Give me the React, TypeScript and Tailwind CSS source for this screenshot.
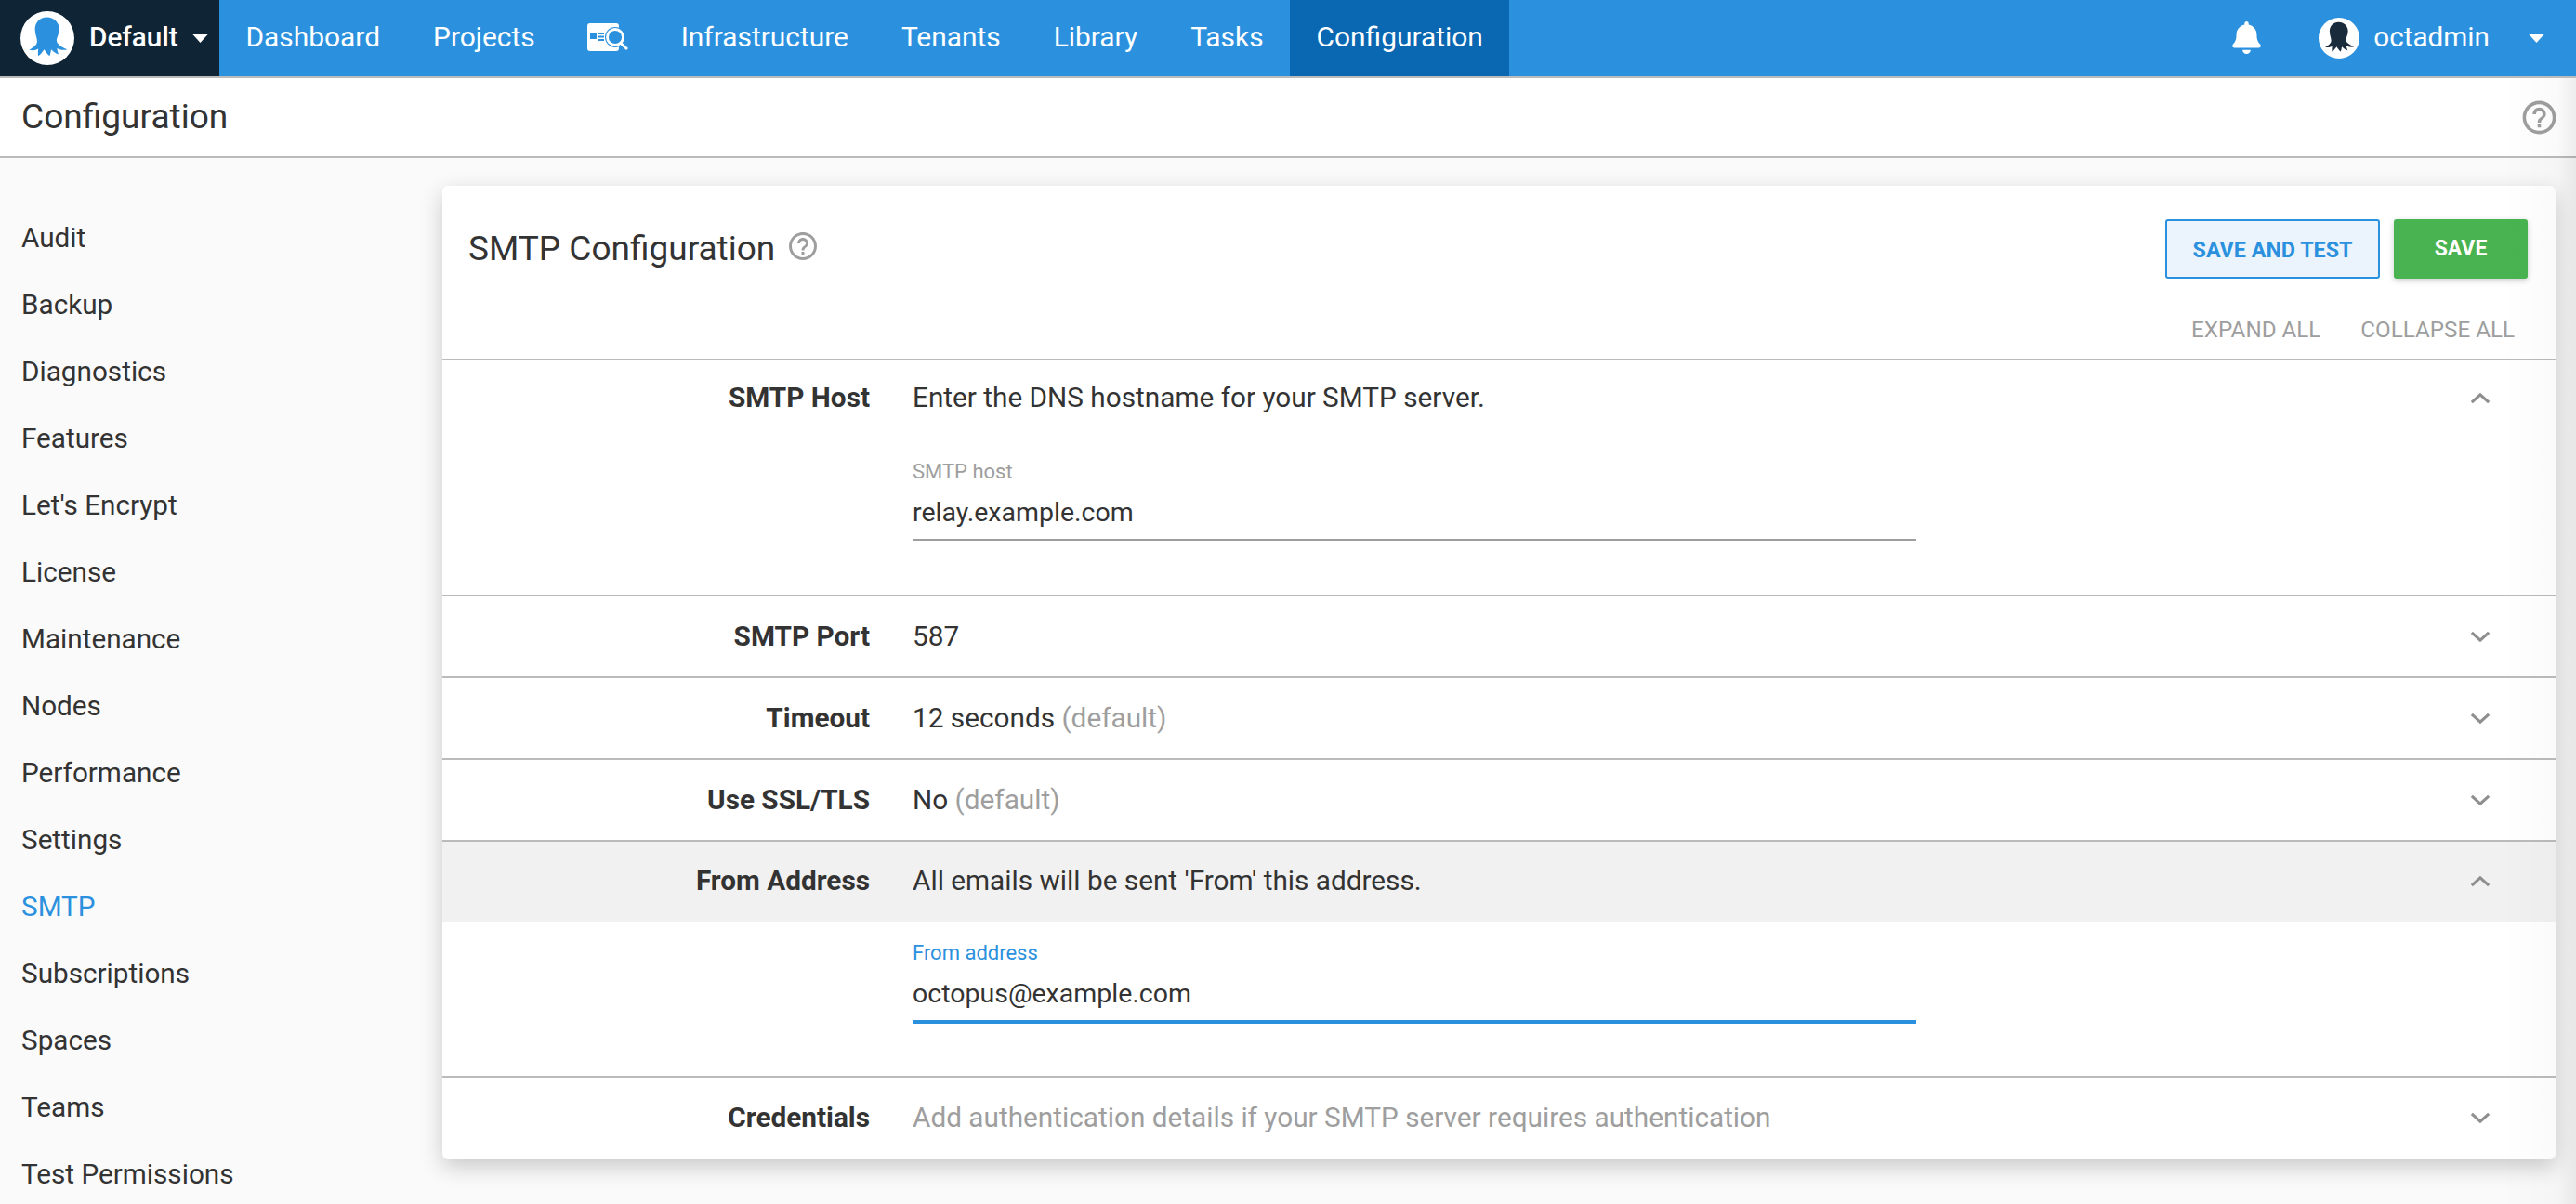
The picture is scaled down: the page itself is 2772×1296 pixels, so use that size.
import { FaBell } from "react-icons/fa";
import { MdHelpOutline } from "react-icons/md";

const OCTO = "M49 11C36 11 27 21 27 33C27 43 31 50 31 56C31 62 25 67 16 72C24 74 30 72 33 70C33 75 32 79 33 83C38 80 41 75 44 71C47 75 50 80 54 83C56 79 56 75 57 71C61 75 66 79 71 80C69 76 68 72 68 69C73 72 80 73 87 71C78 67 68 62 67 55C67 49 72 42 72 33C72 21 62 11 49 11Z";

function Octopus({ color, size }: { color: string; size: number }) {
  return (
    <svg viewBox="0 0 100 100" width={size} height={size} className="shrink-0 block">
      <circle cx="50" cy="50" r="50" fill="#fff" />
      <path d={OCTO} fill={color} />
    </svg>
  );
}

function Caret({ className = "" }: { className?: string }) {
  return (
    <svg viewBox="0 0 18 10" width="17" height="9" className={className}>
      <path d="M0 0h18L9 10Z" fill="#fff" />
    </svg>
  );
}

function Chevron({ up }: { up?: boolean }) {
  return (
    <svg viewBox="0 0 24 14" width="22" height="13" className="shrink-0">
      <path d={up ? "M2 12 12 3l10 9" : "M2 2l10 9 10-9"} fill="none" stroke="#8f8f8f" strokeWidth="3.5" />
    </svg>
  );
}

function LibraryIcon() {
  return (
    <svg viewBox="0 0 44 30" width="44" height="30" className="block -mt-[2px]">
      <rect x="0" y="0" width="34" height="30" rx="3" fill="#fff" />
      <rect x="3" y="10" width="7" height="7" fill="#2b91de" />
      <rect x="11" y="10" width="7" height="2" fill="#2b91de" />
      <rect x="11" y="13.5" width="7" height="2" fill="#2b91de" />
      <rect x="11" y="17" width="7" height="2" fill="#2b91de" />
      <circle cx="30" cy="15" r="11" fill="#2b91de" />
      <circle cx="30" cy="15" r="8.5" fill="none" stroke="#fff" strokeWidth="2.8" />
      <path d="M36 21.5l7 6.5" stroke="#fff" strokeWidth="3" />
    </svg>
  );
}

const nav = ["Dashboard", "Projects", "__icon", "Infrastructure", "Tenants", "Library", "Tasks", "Configuration"];
const side = ["Audit", "Backup", "Diagnostics", "Features", "Let's Encrypt", "License", "Maintenance", "Nodes", "Performance", "Settings", "SMTP", "Subscriptions", "Spaces", "Teams", "Test Permissions"];

function Row({ label, up, hover, border = true, children, body, top = "pt-[20px]" }: { label: string; up?: boolean; hover?: boolean; border?: boolean; children: React.ReactNode; body?: React.ReactNode; top?: string }) {
  return (
    <div className={border ? "border-b-2 border-[#bbbbbb]" : ""}>
      <div className={`flex h-[86px] ${body ? top : "items-center"} ${hover ? "bg-[#f1f1f1]" : ""}`}>
        <div className="w-[460px] shrink-0 text-right font-bold text-[#333333] text-[29.75px] leading-[44px]">{label}</div>
        <div className="ml-[46px] flex-1 text-[29.75px] leading-[44px] text-[#333333]">{children}</div>
        <div className={`w-[92px] shrink-0 flex justify-start ${body ? "pt-[16px]" : "items-center"}`}><Chevron up={up} /></div>
      </div>
      {body}
    </div>
  );
}

function Field({ label, value, focus }: { label: string; value: string; focus?: boolean }) {
  return (
    <div className="h-[166px] pl-[506px] pt-[20px]">
      <div className="w-[1080px]">
        <div className={`text-[22px] leading-[28px] ${focus ? "text-[#2b91de]" : "text-[#9e9e9e]"}`}>{label}</div>
        <div className={`mt-[10px] text-[28.5px] leading-[40px] pb-[8px] text-[#333333] ${focus ? "border-b-4 border-[#2b91de]" : "border-b-2 border-[#9e9e9e]"}`}>{value}</div>
      </div>
    </div>
  );
}

export default function App() {
  return (
    <div className="relative h-[1296px] w-[2772px] overflow-hidden bg-[#fafafa] font-['Roboto',sans-serif] text-[#333333]">
      <header className="flex h-[84px] border-b-2 border-[#bbbbbb] bg-[#2b91de] text-white">
        <div className="flex w-[236px] items-center bg-[#0f2535] pl-[22px]">
          <Octopus color="#2b91de" size={58} />
          <span className="ml-[16px] pb-[2px] text-[29.7px] font-medium">Default</span>
          <Caret className="ml-[15px]" />
        </div>
        <nav className="flex">
          {nav.map((n) =>
            n === "__icon" ? (
              <div key={n} className="flex items-center px-[28px]"><LibraryIcon /></div>
            ) : (
              <div key={n} className={`flex items-center px-[28.5px] pb-[2px] text-[29.9px] ${n === "Configuration" ? "bg-[#0a67b1]" : ""}`}>{n}</div>
            ),
          )}
        </nav>
        <div className="ml-auto flex items-center">
          <FaBell size={35} className="-mt-[2px]" />
          <span className="ml-[60px]"><Octopus color="#1a2b3c" size={44} /></span>
          <span className="ml-[15px] pb-[2px] text-[29.7px]">octadmin</span>
          <Caret className="ml-[42px] mr-[34px]" />
        </div>
      </header>
      <div className="flex h-[86px] items-center justify-between border-b-2 border-[#bbbbbb] bg-white pl-[23px] pr-[18px]">
        <h1 className="text-[37.1px] text-[#333333]">Configuration</h1>
        <MdHelpOutline size={43} className="text-[#9e9e9e]" />
      </div>
      <div className="flex">
        <aside className="w-[476px] shrink-0 pl-[23px] pt-[50px]">
          {side.map((s) => (
            <div key={s} className={`flex h-[72px] items-center text-[29.7px] ${s === "SMTP" ? "text-[#2b91de]" : "text-[#333333]"}`}>{s}</div>
          ))}
        </aside>
        <main className="mt-[30px] h-[1048px] w-[2274px] shrink-0 rounded-[6px] bg-white shadow-[0_8px_24px_rgba(0,0,0,0.2)]">
          <div className="h-[188px] border-b-2 border-[#bbbbbb]">
            <div className="flex items-start justify-between pl-[28px] pr-[30px] pt-[36px]">
              <div className="flex items-center pt-[5px]">
                <h2 className="text-[37px] leading-[54px] text-[#333333]">SMTP Configuration</h2>
                <MdHelpOutline size={36} className="ml-[12px] -mt-[6px] text-[#9e9e9e]" />
              </div>
              <div className="flex gap-[15px]">
                <button className="h-[64px] w-[231px] rounded-[3px] border-2 border-[#2b91de] bg-[#ebf4fc] pt-[2px] text-[23.3px] font-bold text-[#2b91de]">SAVE AND TEST</button>
                <button className="h-[64px] w-[144px] rounded-[3px] bg-[#48b350] pt-[1px] text-[23px] font-bold text-white shadow-[0_2px_6px_rgba(0,0,0,0.2)]">SAVE</button>
              </div>
            </div>
            <div className="mt-[38px] flex justify-end gap-[43px] pr-[44px] text-[24.2px] leading-[34px] text-[#9e9e9e]">
              <span>EXPAND ALL</span>
              <span>COLLAPSE ALL</span>
            </div>
          </div>
          <Row label="SMTP Host" up top="pt-[18px]" body={<Field label="SMTP host" value="relay.example.com" />}>
            Enter the DNS hostname for your SMTP server.
          </Row>
          <Row label="SMTP Port">587</Row>
          <Row label="Timeout">12 seconds <span className="text-[#9e9e9e]">(default)</span></Row>
          <Row label="Use SSL/TLS">No <span className="text-[#9e9e9e]">(default)</span></Row>
          <Row label="From Address" up hover body={<Field label="From address" value="octopus@example.com" focus />}>
            All emails will be sent 'From' this address.
          </Row>
          <Row label="Credentials" border={false}><span className="text-[#9e9e9e]">Add authentication details if your SMTP server requires authentication</span></Row>
        </main>
      </div>
      <div className="pointer-events-none absolute bottom-0 right-0 top-[84px] w-[80px] bg-[linear-gradient(to_right,transparent,rgba(0,0,0,0.02)_75%,rgba(0,0,0,0.07))]" />
    </div>
  );
}
